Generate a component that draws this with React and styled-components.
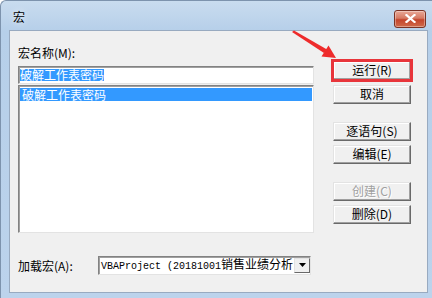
import React from 'react'
import styled, { createGlobalStyle } from 'styled-components'

const Global = createGlobalStyle`
  html, body { margin: 0; padding: 0; background: #fff; }
  body { font-family: "Noto Sans CJK SC", "Liberation Sans", sans-serif; }
`

const Frame = styled.div`
  position: relative;
  width: 432px;
  height: 298px;
  box-sizing: border-box;
  display: flex;
  flex-direction: column;
  padding: 0 4px 5px 8px;
  background: linear-gradient(180deg, #c9dcef 0px, #b6cfe9 30px, #bcd3ec 100%);
  border-left: 1px solid #7d93ad;
  border-top: 1px solid #7d93ad;
  border-top-left-radius: 6px;
  overflow: hidden;
`

const TitleBar = styled.div`
  height: 29px;
  display: flex;
  align-items: center;
  justify-content: space-between;
  margin-left: 4px;
  margin-right: 2px;
`

const Title = styled.span`
  font-size: 12px;
  color: #000;
  margin-top: 2px;
  text-shadow: 0 0 6px rgba(255,255,255,0.9);
`

const CloseBtn = styled.div`
  width: 30px;
  height: 16px;
  margin-top: 6px;
  border: 1px solid #7a3224;
  border-radius: 3px;
  background: linear-gradient(180deg, #e8a897 0%, #d67a63 45%, #c4442b 55%, #cf6a4a 100%);
  display: flex;
  align-items: center;
  justify-content: center;
  box-shadow: inset 0 0 0 1px rgba(255,255,255,0.35);
`

const Client = styled.div`
  flex: 1;
  background: #f0f0f0;
  border: 1px solid #98aac0;
  display: flex;
  flex-direction: column;
  padding: 14px 0 0 8px;
`

const TopRow = styled.div`
  display: flex;
  gap: 19px;
`

const LeftCol = styled.div`
  width: 296px;
  display: flex;
  flex-direction: column;
`

const Label = styled.div`
  font-size: 12px;
  height: 21px;
  line-height: 16px;
  color: #000;
`

const Sunken = styled.div`
  box-sizing: border-box;
  background: #fff;
  border: 1px solid;
  border-color: #828282 #e3e3e3 #e3e3e3 #828282;
  box-shadow: inset 1px 1px 0 #a0a0a0;
`

const TextField = styled(Sunken)`
  height: 18px;
  padding: 2px 0 0 1px;
  font-size: 12px;
  line-height: 12px;
`

const Selected = styled.span`
  background: #3399ff;
  color: #fff;
  display: inline-block;
  height: 12px;
  line-height: 12px;
`

const ListBox = styled(Sunken)`
  margin-top: 1px;
  height: 148px;
  padding: 2px 1px 0 1px;
`

const ListItem = styled.div`
  height: 13px;
  line-height: 13px;
  font-size: 12px;
  padding-left: 2px;
  background: ${p => (p.active ? '#3399ff' : 'transparent')};
  color: ${p => (p.active ? '#fff' : '#000')};
`

const RightCol = styled.div`
  width: 78px;
  margin-top: 16px;
  display: flex;
  flex-direction: column;
`

const Btn = styled.div`
  box-sizing: border-box;
  height: 19px;
  margin-top: ${p => p.gap || 0}px;
  background: #f0f0f0;
  border: 1px solid;
  border-color: #e3e3e3 #696969 #696969 #e3e3e3;
  box-shadow: inset -1px -1px 0 #a0a0a0, inset 1px 1px 0 #fff;
  font-size: 12px;
  line-height: 16px;
  text-align: center;
  color: ${p => (p.disabled ? '#a0a0a0' : '#000')};
  text-shadow: ${p => (p.disabled ? '1px 1px 0 #fff' : 'none')};
  outline: ${p => (p.marked ? '3px solid #e8353b' : 'none')};
  outline-offset: ${p => (p.marked ? '-1px' : '0')};
`

const BottomRow = styled.div`
  margin-top: 23px;
  display: flex;
  align-items: center;
  height: 18px;
`

const BottomLabel = styled.div`
  width: 80px;
  font-size: 12px;
  color: #000;
`

const Combo = styled(Sunken)`
  width: 213px;
  height: 19px;
  display: flex;
  align-items: center;
  padding-left: 2px;
  overflow: hidden;
`

const ComboText = styled.div`
  flex: 1;
  white-space: nowrap;
  font-size: 12px;
  line-height: 14px;
`

const Mono = styled.span`
  font-family: "Liberation Mono", monospace;
  font-size: 10px;
`

const DropBtn = styled.div`
  box-sizing: border-box;
  width: 16px;
  height: 15px;
  background: #f0f0f0;
  border: 1px solid;
  border-color: #e3e3e3 #696969 #696969 #e3e3e3;
  display: flex;
  align-items: center;
  justify-content: center;
`

const Arrow = styled.svg`
  position: absolute;
  left: 0;
  top: 0;
  pointer-events: none;
`

export default function App() {
  return (
    <>
      <Global />
      <Frame>
        <TitleBar>
          <Title>宏</Title>
          <CloseBtn>
            <svg width="11" height="9" viewBox="0 0 11 9">
              <path d="M1.5 1 L9.5 8 M9.5 1 L1.5 8" stroke="#fff" strokeWidth="2.2" strokeLinecap="square" />
            </svg>
          </CloseBtn>
        </TitleBar>
        <Client>
          <TopRow>
            <LeftCol>
              <Label>宏名称(M):</Label>
              <TextField><Selected>破解工作表密码</Selected></TextField>
              <ListBox>
                <ListItem active>破解工作表密码</ListItem>
              </ListBox>
            </LeftCol>
            <RightCol>
              <Btn marked>运行(R)</Btn>
              <Btn gap={5}>取消</Btn>
              <Btn gap={18}>逐语句(S)</Btn>
              <Btn gap={4}>编辑(E)</Btn>
              <Btn gap={18} disabled>创建(C)</Btn>
              <Btn gap={4}>删除(D)</Btn>
            </RightCol>
          </TopRow>
          <BottomRow>
            <BottomLabel>加载宏(A):</BottomLabel>
            <Combo>
              <ComboText><Mono>VBAProject (20181001</Mono>销售业绩分析</ComboText>
              <DropBtn>
                <svg width="7" height="4" viewBox="0 0 7 4"><path d="M0 0 H7 L3.5 4 Z" fill="#000" /></svg>
              </DropBtn>
            </Combo>
          </BottomRow>
        </Client>
        <Arrow width="432" height="298" viewBox="0 0 432 298">
          <polygon points="291,31 293,29.5 326,48.5 323,52" fill="#ee2b2b" />
          <polygon points="335,57 320.5,55.5 327.5,44.5" fill="#ee2b2b" />
        </Arrow>
      </Frame>
    </>
  )
}
